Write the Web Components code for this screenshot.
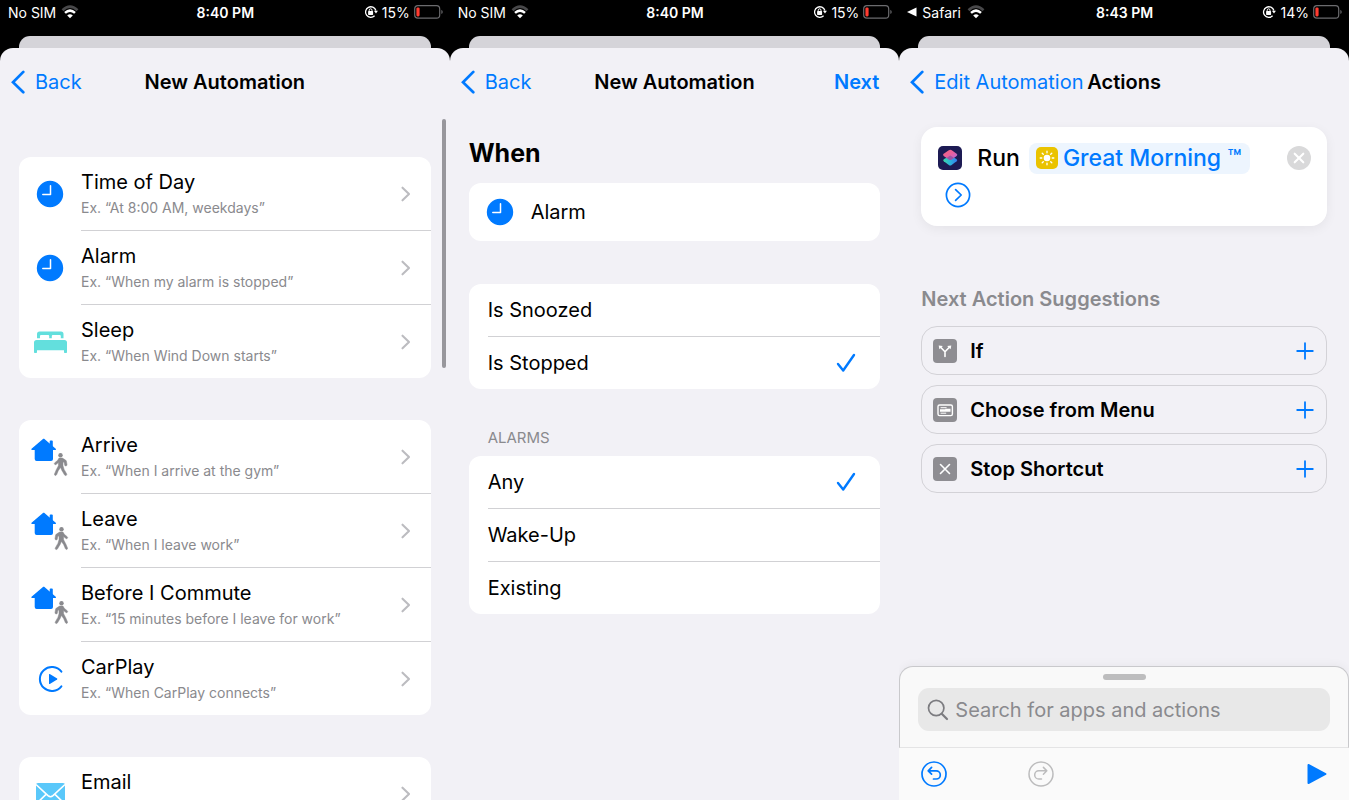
<!DOCTYPE html>
<html lang="en">
<head>
<meta charset="utf-8">
<meta name="viewport" content="width=device-width, initial-scale=1">
<title>New Automation</title>
<style>
    html, body {
        margin: 0;
        height: 100%;
    }

    body {
        --blue: #007aff;
        --gray: #8a8a8e;
        --sheet: #f2f1f6;
        --line: #d1d1d4;
        display: grid;
        grid-template-columns: repeat(3, 1fr);
        background: #000;
        color: #000;
        font-family: Inter, "Liberation Sans", sans-serif;
        font-size: 20px;
        overflow: hidden;
    }
</style>
</head>
<body>
    <phone-screen>
        <status-bar slot="status" carrier="No SIM" time="8:40 PM" battery="15%"></status-bar>
        <nav-bar slot="nav" back="Back" heading="New Automation"></nav-bar>
        <scroll-thumb slot="overlay"></scroll-thumb>
        <trigger-list>
            <card-group>
                <trigger-row icon="clock" label="Time of Day" example="Ex. “At 8:00 AM, weekdays”"></trigger-row>
                <trigger-row icon="clock" label="Alarm" example="Ex. “When my alarm is stopped”"></trigger-row>
                <trigger-row icon="bed" label="Sleep" example="Ex. “When Wind Down starts”"></trigger-row>
            </card-group>
            <card-group>
                <trigger-row icon="arrive" label="Arrive" example="Ex. “When I arrive at the gym”"></trigger-row>
                <trigger-row icon="leave" label="Leave" example="Ex. “When I leave work”"></trigger-row>
                <trigger-row icon="leave" label="Before I Commute" example="Ex. “15 minutes before I leave for work”"></trigger-row>
                <trigger-row icon="carplay" label="CarPlay" example="Ex. “When CarPlay connects”"></trigger-row>
            </card-group>
            <card-group>
                <trigger-row icon="email" label="Email" example=" "></trigger-row>
            </card-group>
        </trigger-list>
    </phone-screen>

    <phone-screen>
        <status-bar slot="status" carrier="No SIM" time="8:40 PM" battery="15%"></status-bar>
        <nav-bar slot="nav" back="Back" heading="New Automation" next="Next"></nav-bar>
        <when-form>
            <card-group><summary-row icon="clock">Alarm</summary-row></card-group>
            <option-group name="event" options="Is Snoozed|Is Stopped" value="Is Stopped"></option-group>
            <option-group name="alarm" label="ALARMS" options="Any|Wake-Up|Existing" value="Any"></option-group>
        </when-form>
    </phone-screen>

    <phone-screen>
        <status-bar slot="status" return-app carrier="Safari" time="8:43 PM" battery="14%"></status-bar>
        <nav-bar slot="nav" back="Edit Automation" heading="Actions"></nav-bar>
        <action-card verb="Run">Great Morning ™</action-card>
        <suggestion-list heading="Next Action Suggestions">
            <suggestion-item icon="branch">If</suggestion-item>
            <suggestion-item icon="menu">Choose from Menu</suggestion-item>
            <suggestion-item icon="stop">Stop Shortcut</suggestion-item>
        </suggestion-list>
        <search-sheet slot="footer" placeholder="Search for apps and actions"></search-sheet>
    </phone-screen>

<script>
const HOUSE = `
    <path fill="#007aff" stroke="#007aff" stroke-linejoin="round" stroke-width="1.4" d="M13.7 2.4 L25.3 12.3 H22.3 V22 Q22.3 23.3 21 23.3 H6.7 Q5.4 23.3 5.4 22 V12.3 H2 Z"/>
    <path fill="#007aff" d="M19.7 4.3q0-.9.9-.9h1.3q.9 0 .9.9V11h-3.1z"/>`;
const WALKER = `
    <circle cx="7.5" cy="2.2" r="2.2"/>
    <path stroke="#8a8a8e" stroke-width=".5" d="M5.6 5.1H9l1.3 2.2 2.9 2.4q1.1 1-.1 1.9-.5.3-1.2-.2L9.6 9.6v3.1l2.2 4.2 1.7 4q.3 1.3-.8 1.6-.8.1-1.3-.8l-1.8-4.2-2.2-3.1-1.3 3.2-2.7 4.4q-.7.9-1.6.4-1-.6-.4-1.7l2.5-4.3L5 12.8V8.7L3.7 9.8l-.4 2.4q-.3 1-1.3.8-1-.2-1-1.3l.5-3.2Q1.6 7.8 2.4 7.1z"/>`;

// name: [width, height, markup]
const ICONS = {
    clock: [40, 40, `<circle cx="20" cy="20" r="13.2" fill="#007aff"/><path d="M20.5 11.8V20.5H12.8" fill="none" stroke="#fff" stroke-width="1.5" stroke-linecap="round" stroke-linejoin="round"/>`],
    bed: [40, 40, `<g fill="#63dfdd"><path d="M7 16.2V12Q7 9.5 9.5 9.5H31q2.5 0 2.5 2.5v4.2h-2.7V14q0-1-1-1h-7q-1 0-1 1v2.2h-2.6V14q0-1-1-1h-7.2q-1 0-1 1v2.2z"/><path d="M4 30.3V20.6Q4 18 6.6 18h27.8q2.6 0 2.6 2.6v9.7q0 .7-.8.7h-1.4q-.8 0-.8-.8v-1.9H7v2q0 .7-.8.7H4.8q-.8 0-.8-.7z"/></g>`],
    arrive: [40, 40, HOUSE + `<g fill="#8a8a8e" transform="translate(38 16) scale(-1 1)">${WALKER}</g>`],
    leave: [40, 40, HOUSE + `<g fill="#8a8a8e" transform="translate(24 16)">${WALKER}</g>`],
    carplay: [40, 40, `<g transform="translate(0 -1)"><path d="M31.4 13.7A12 12 0 1 0 31.4 28.3" fill="none" stroke="#007aff" stroke-width="2" stroke-linecap="round"/><path d="M19 16.6v8.9q0 .9.8.5l7.3-4.5q.6-.5 0-.9l-7.3-4.5q-.8-.4-.8.5z" fill="#007aff"/></g>`],
    email: [40, 40, `<rect x="6" y="9" width="29" height="22" rx="2" fill="#5ac8fa"/><path d="M6 10.5L18 21.7q2.5 2 5 0L35 10.5M6 30l10.3-9.8M35 30L24.7 20.2" fill="none" stroke="#fff" stroke-width="1.6"/>`],
    chevron: [10, 16, `<path d="M1.5 1.7L8 8l-6.5 6.3" fill="none" stroke="#bcbcc0" stroke-width="2.1" stroke-linecap="round" stroke-linejoin="round"/>`],
    back: [14, 24, `<path d="M12.3 1.9L2 12.2l10.3 10.1" fill="none" stroke="#007aff" stroke-width="2.7" stroke-linecap="round"/>`],
    check: [20, 20, `<path d="M2 11l5.2 6.5L18 2" fill="none" stroke="#007aff" stroke-width="2.4" stroke-linecap="round" stroke-linejoin="round"/>`],
    wifi: [18, 14, `<g fill="none"><path d="M1.5 5.2Q9-2 16.5 5.2" stroke="#48484a" stroke-width="2.6"/><path d="M4 7.9q5-4.6 10 0" stroke="#fff" stroke-width="2.5"/></g><path d="M6.2 10.4q2.8-2.4 5.6 0L9 13.3z" fill="#fff"/>`],
    lock: [14, 14, `<path d="M11.9 5.5A5.3 5.3 0 1 0 10.6 10.8" fill="none" stroke="#fff" stroke-width="1.3"/><path d="M9.9 5.8h4L12 8.6z" fill="#fff"/><rect x="4.1" y="6.1" width="5" height="3.8" rx=".6" fill="#fff"/><path d="M5.2 6.4V5.2a1.4 1.4 0 0 1 2.8 0v1.2" fill="none" stroke="#fff"/>`],
    battery: [29, 14, `<rect x=".7" y=".7" width="25" height="12.4" rx="3.2" fill="none" stroke="#6b6b6e" stroke-width="1.2"/><rect x="2.4" y="2.4" width="3.2" height="9" rx="1.3" fill="#ff3b30"/><path d="M27.4 4.8q1.3.9 1.3 2.1T27.4 9z" fill="#6b6b6e"/>`],
    caret: [10, 10, `<path d="M0 5L9.5.5v9z" fill="#fff"/>`],
    shortcuts: [24, 24, `<defs><linearGradient id="a" x1="0" y1="0" x2="1" y2="1"><stop stop-color="#f8677a"/><stop offset=".5" stop-color="#e95fa0"/><stop offset="1" stop-color="#a96ae8"/></linearGradient><linearGradient id="b" x1="0" y1="0" x2="1" y2="0"><stop stop-color="#3ed9a4"/><stop offset=".5" stop-color="#2bb4dc"/><stop offset="1" stop-color="#367cf0"/></linearGradient></defs><rect width="24" height="24" rx="5" fill="#1d1b54"/><path d="M12.6 9.2l6 4.1q1.3 1 0 2l-5 3.7q-1.4 1-2.8 0l-5-3.7q-1.3-1 0-2z" fill="url(#b)"/><path d="M10.8 4.2q1.5-1 3 0l4.8 3.6q1.4 1.1 0 2.2l-4.8 3.5q-1.5 1-3 0L5.7 10q-1.4-1.1 0-2.2z" fill="url(#a)"/><path d="M8.5 11.9l2.3 1.6q1.5 1 3 0l2.3-1.6-3-2q-.8-.6-1.6 0z" fill="#7b4f99" opacity=".65"/>`],
    sun: [22, 22, `<rect width="22" height="22" rx="5" fill="#eac300"/><circle cx="11" cy="11" r="3.3" fill="#fff"/><path d="M11 4.2v1.6M11 16.2v1.6M4.2 11h1.6M16.2 11h1.6M6.2 6.2l1.1 1.1M14.7 14.7l1.1 1.1M6.2 15.8l1.1-1.1M14.7 7.3l1.1-1.1" stroke="#fff" stroke-width="1.3" stroke-linecap="round"/>`],
    close: [24, 24, `<circle cx="12" cy="12" r="12" fill="#d9d9da"/><path d="M7.7 7.7l8.6 8.6M16.3 7.7l-8.6 8.6" stroke="#fff" stroke-width="2.1" stroke-linecap="round"/>`],
    more: [26, 26, `<g fill="none" stroke="#007aff" stroke-width="1.7"><circle cx="13" cy="13" r="11.6"/><path d="M10.6 7.6l5.6 5.4-5.6 5.4" stroke-linecap="round" stroke-linejoin="round"/></g>`],
    branch: [24, 24, `<rect width="24" height="24" rx="4" fill="#8e8d92"/><path d="M12 17.5V12.8L7.4 8M12 12.8L16.6 8" fill="none" stroke="#fff" stroke-width="1.6" stroke-linecap="round"/><path d="M5.7 6.4l4.2.5-3.5 3.4zM18.3 6.4l-4.2.5 3.5 3.4z" fill="#fff"/>`],
    menu: [24, 24, `<rect width="24" height="24" rx="4" fill="#8e8d92"/><rect x="5" y="7" width="14.4" height="10.6" rx="1.6" fill="none" stroke="#fff" stroke-width="1.4"/><path d="M7.6 9.7h6M7.6 15.2h5.6" stroke="#fff"/><path d="M7 11.2h5.3v-.5h5.2v3H7z" fill="#fff"/>`],
    stop: [24, 24, `<rect width="24" height="24" rx="4" fill="#8e8d92"/><path d="M7.5 7.5l9 9M16.5 7.5l-9 9" stroke="#fff" stroke-width="1.6" stroke-linecap="round"/>`],
    plus: [18, 18, `<path d="M9 1.2v15.6M1.2 9h15.6" stroke="#007aff" stroke-width="1.8" stroke-linecap="round"/>`],
    search: [22, 22, `<g fill="none" stroke="#7c7c80" stroke-linecap="round"><circle cx="9.2" cy="9" r="7.7" stroke-width="1.7"/><path d="M15 15l5 5" stroke-width="2.2"/></g>`],
    undo: [26, 26, `<g fill="none" stroke="#007aff" stroke-width="1.7" stroke-linecap="round" stroke-linejoin="round"><circle cx="13" cy="13" r="12"/><path d="M10.6 6.4L7.2 9.8l3.4 3.4M7.6 9.8h7.6a4.1 4.1 0 0 1 0 8.2h-2.7"/></g>`],
    redo: [26, 26, `<g fill="none" stroke="#bcbcbd" stroke-width="1.5" stroke-linecap="round" stroke-linejoin="round"><circle cx="13" cy="13" r="12"/><path d="M15.4 6.4l3.4 3.4-3.4 3.4M18.4 9.8h-7.6a4.1 4.1 0 0 0 0 8.2h2.7"/></g>`],
    play: [20, 22, `<path d="M1.4 1.9v18.2L18.6 11z" fill="#007aff" stroke="#007aff" stroke-width="1.8" stroke-linejoin="round"/>`]
};

const BUTTON_RESET = `
    button {
        margin: 0;
        padding: 0;
        border: 0;
        background: none;
        color: inherit;
        font: inherit;
        text-align: left;
        cursor: pointer;
    }
`;

class BaseElement extends HTMLElement {
    constructor() {
        super();

        this.attachShadow({ mode: 'open' });
    }

    connectedCallback() {
        this.shadowRoot.innerHTML = this.template();
    }

    attr(name) {
        return this.getAttribute(name) || '';
    }
}

class AppIcon extends BaseElement {
    template() {
        const [width, height, markup] = ICONS[this.attr('name')];

        return `
            <style>
                :host { display: block; flex: none; }
                svg { display: block; }
            </style>
            <svg width="${width}" height="${height}" viewBox="0 0 ${width} ${height}" aria-hidden="true">${markup}</svg>
        `;
    }
}

class PhoneScreen extends BaseElement {
    template() {
        return `
            <style>
                :host {
                    display: flex;
                    flex-direction: column;
                    min-width: 0;
                    height: 100vh;
                    overflow: hidden;
                }
                .behind {
                    flex: none;
                    height: 12px;
                    margin: 12px 19px 0;
                    border-radius: 11px 11px 0 0;
                    background: #d5d4d9;
                }
                .sheet {
                    position: relative;
                    display: flex;
                    flex: 1;
                    flex-direction: column;
                    min-height: 0;
                    border-radius: 13px 13px 0 0;
                    background: var(--sheet);
                }
                main {
                    flex: 1;
                    min-height: 0;
                    overflow: hidden;
                }
            </style>
            <slot name="status"></slot>
            <div class="behind"></div>
            <div class="sheet">
                <slot name="nav"></slot>
                <main><slot></slot></main>
                <slot name="footer"></slot>
                <slot name="overlay"></slot>
            </div>
        `;
    }
}

class StatusBar extends BaseElement {
    template() {
        const caret = this.hasAttribute('return-app') ? '<app-icon name="caret"></app-icon>' : '';

        return `
            <style>
                :host {
                    display: grid;
                    grid-template-columns: 1fr auto 1fr;
                    align-items: center;
                    flex: none;
                    height: 24px;
                    padding: 0 7px 0 8px;
                    color: #fff;
                    font-size: 14px;
                }
                div { display: flex; align-items: center; gap: 5px; }
                .left app-icon + span { margin-right: 1px; }
                .right { justify-content: flex-end; gap: 4px; }
                b { font-weight: 600; }
            </style>
            <div class="left">${caret}<span>${this.attr('carrier')}</span><app-icon name="wifi"></app-icon></div>
            <b>${this.attr('time')}</b>
            <div class="right"><app-icon name="lock"></app-icon><span>${this.attr('battery')}</span><app-icon name="battery"></app-icon></div>
        `;
    }
}

class NavBar extends BaseElement {
    template() {
        const next = this.attr('next') ? `<button class="next">${this.attr('next')}</button>` : '<span></span>';

        return `
            <style>
                ${BUTTON_RESET}
                :host {
                    display: grid;
                    grid-template-columns: 1fr auto 1fr;
                    align-items: center;
                    flex: none;
                    height: 68px;
                    padding: 0 11px;
                }
                h1 { margin: 0; font-size: 20px; font-weight: 600; }
                button { color: var(--blue); white-space: nowrap; }
                .back { display: flex; align-items: center; gap: 10px; }
                .next { justify-self: end; padding-right: 9px; font-weight: 600; }
            </style>
            <button class="back"><app-icon name="back"></app-icon>${this.attr('back')}</button>
            <h1>${this.attr('heading')}</h1>
            ${next}
        `;
    }
}

// Scroll indicator, drawn over the list
class ScrollThumb extends BaseElement {
    template() {
        return `
            <style>
                :host {
                    position: absolute;
                    top: 71px;
                    right: 4px;
                    width: 4px;
                    height: 249px;
                    border-radius: 2px;
                    background: #98979c;
                }
            </style>
        `;
    }
}

class TriggerList extends BaseElement {
    template() {
        return `
            <style>
                :host {
                    display: flex;
                    flex-direction: column;
                    gap: 42px;
                    padding: 41px 19px 0;
                }
            </style>
            <slot></slot>
        `;
    }
}

class CardGroup extends BaseElement {
    template() {
        return `
            <style>
                :host {
                    display: block;
                    border-radius: 12px;
                    background: #fff;
                    overflow: hidden;
                }
                ::slotted(:last-child) { --divider: 0; }
            </style>
            <slot></slot>
        `;
    }
}

class TriggerRow extends BaseElement {
    template() {
        return `
            <style>
                ${BUTTON_RESET}
                :host { display: block; }
                button {
                    display: grid;
                    grid-template-columns: 62px 1fr;
                    align-items: center;
                    width: 100%;
                }
                .icon { justify-self: center; }
                .body {
                    display: flex;
                    align-items: center;
                    justify-content: space-between;
                    height: 73px;
                    padding-right: 20px;
                    border-bottom: var(--divider, 1px) solid var(--line);
                }
                .text { padding-top: 2px; }
                .label, .example { display: block; line-height: 26px; }
                .example { min-height: 26px; color: var(--gray); font-size: 14px; }
            </style>
            <button>
                <app-icon class="icon" name="${this.attr('icon')}"></app-icon>
                <span class="body">
                    <span class="text">
                        <span class="label">${this.attr('label')}</span>
                        <span class="example">${this.attr('example')}</span>
                    </span>
                    <app-icon name="chevron"></app-icon>
                </span>
            </button>
        `;
    }
}

class SummaryRow extends BaseElement {
    template() {
        return `
            <style>
                :host {
                    display: grid;
                    grid-template-columns: 62px 1fr;
                    align-items: center;
                    height: 58px;
                }
                app-icon { justify-self: center; }
            </style>
            <app-icon name="${this.attr('icon')}"></app-icon>
            <span><slot></slot></span>
        `;
    }
}

class WhenForm extends BaseElement {
    template() {
        return `
            <style>
                :host { display: block; padding: 21px 19px 0; }
                h2 { margin: 0 0 14px; font-size: 25px; font-weight: 700; line-height: 32px; }
                ::slotted(option-group) { margin-top: 43px; }
                ::slotted(option-group[label]) { margin-top: 39px; }
            </style>
            <h2>When</h2>
            <slot></slot>
        `;
    }
}

class OptionGroup extends BaseElement {
    template() {
        const name = this.attr('name');
        const value = this.attr('value');
        const legend = this.attr('label') ? `<h3>${this.attr('label')}</h3>` : '';
        const rows = this.attr('options').split('|').map((option) => `
            <label>
                <span>${option}</span>
                <input type="radio" name="${name}" value="${option}" ${option === value ? 'checked' : ''}>
                <app-icon name="check"></app-icon>
            </label>
        `).join('');

        return `
            <style>
                :host { display: block; }
                h3 {
                    margin: 0 0 8px 19px;
                    color: var(--gray);
                    font-size: 15px;
                    font-weight: 400;
                    line-height: 20px;
                }
                .card {
                    padding-left: 19px;
                    border-radius: 12px;
                    background: #fff;
                }
                label {
                    display: flex;
                    align-items: center;
                    justify-content: space-between;
                    height: 52px;
                    padding-right: 24px;
                    cursor: pointer;
                }
                label + label { border-top: 1px solid var(--line); }
                input { appearance: none; width: 0; height: 0; margin: 0 0 0 auto; }
                app-icon { visibility: hidden; }
                input:checked + app-icon { visibility: visible; }
            </style>
            ${legend}
            <div class="card" role="radiogroup">${rows}</div>
        `;
    }
}

class ActionCard extends BaseElement {
    template() {
        return `
            <style>
                ${BUTTON_RESET}
                :host {
                    display: block;
                    margin: 11px 22px 0;
                    padding: 14px 16px 18px 17px;
                    border-radius: 16px;
                    background: #fff;
                    box-shadow: 0 3px 12px rgba(0, 0, 0, 0.06);
                }
                .line {
                    display: flex;
                    align-items: center;
                    height: 34px;
                    font-size: 23px;
                    white-space: nowrap;
                }
                .verb { margin: 0 9px 0 15px; font-weight: 500; }
                .token {
                    display: flex;
                    align-items: center;
                    gap: 5px;
                    height: 31px;
                    padding: 0 8px 0 7px;
                    border-radius: 8px;
                    background: #edf5fe;
                    color: var(--blue);
                    font-weight: 500;
                }
                .close { margin-left: auto; }
                .more { display: block; margin: 7px 0 0 7px; }
            </style>
            <div class="line">
                <app-icon name="shortcuts"></app-icon>
                <span class="verb">${this.attr('verb')}</span>
                <button class="token"><app-icon name="sun"></app-icon><slot></slot></button>
                <button class="close" aria-label="Remove"><app-icon name="close"></app-icon></button>
            </div>
            <button class="more" aria-label="Show more"><app-icon name="more"></app-icon></button>
        `;
    }
}

class SuggestionList extends BaseElement {
    template() {
        return `
            <style>
                :host {
                    display: flex;
                    flex-direction: column;
                    gap: 10px;
                    margin: 60px 22px 0;
                }
                h2 {
                    margin: 0 0 4px;
                    color: var(--gray);
                    font-size: 20px;
                    font-weight: 600;
                    line-height: 26px;
                }
            </style>
            <h2>${this.attr('heading')}</h2>
            <slot></slot>
        `;
    }
}

class SuggestionItem extends BaseElement {
    template() {
        return `
            <style>
                ${BUTTON_RESET}
                :host { display: block; }
                button {
                    display: flex;
                    align-items: center;
                    gap: 13px;
                    box-sizing: border-box;
                    width: 100%;
                    height: 49px;
                    padding: 0 12px 0 11px;
                    border: 1px solid #d3d2d7;
                    border-radius: 16px;
                    font-weight: 600;
                }
                span { flex: 1; }
            </style>
            <button>
                <app-icon name="${this.attr('icon')}"></app-icon>
                <span><slot></slot></span>
                <app-icon name="plus"></app-icon>
            </button>
        `;
    }
}

class SearchSheet extends BaseElement {
    template() {
        return `
            <style>
                ${BUTTON_RESET}
                :host { display: block; flex: none; }
                .drawer {
                    padding: 7px 18px 16px;
                    border: 1px solid #c9c9cc;
                    border-bottom-color: #e4e4e5;
                    border-radius: 14px 14px 0 0;
                    background: #f9f9f9;
                    box-shadow: 0 -2px 8px rgba(0, 0, 0, 0.04);
                }
                .handle {
                    width: 43px;
                    height: 6px;
                    margin: 0 auto 8px;
                    border-radius: 3px;
                    background: #bdbdbe;
                }
                label {
                    display: flex;
                    align-items: center;
                    gap: 6px;
                    height: 43px;
                    padding: 0 9px;
                    border-radius: 11px;
                    background: #e8e8e8;
                }
                input {
                    flex: 1;
                    min-width: 0;
                    padding: 0;
                    border: 0;
                    outline: 0;
                    background: none;
                    font: inherit;
                }
                input::placeholder { color: var(--gray); opacity: 1; }
                .tools {
                    display: flex;
                    align-items: center;
                    gap: 81px;
                    height: 52px;
                    padding: 0 22px;
                    background: #fafafa;
                }
                .play { margin-left: auto; }
            </style>
            <div class="drawer">
                <div class="handle"></div>
                <label>
                    <app-icon name="search"></app-icon>
                    <input type="search" aria-label="${this.attr('placeholder')}" placeholder="${this.attr('placeholder')}">
                </label>
            </div>
            <div class="tools">
                <button aria-label="Undo"><app-icon name="undo"></app-icon></button>
                <button aria-label="Redo" disabled><app-icon name="redo"></app-icon></button>
                <button class="play" aria-label="Play"><app-icon name="play"></app-icon></button>
            </div>
        `;
    }
}

customElements.define('app-icon', AppIcon);
customElements.define('phone-screen', PhoneScreen);
customElements.define('status-bar', StatusBar);
customElements.define('nav-bar', NavBar);
customElements.define('scroll-thumb', ScrollThumb);
customElements.define('trigger-list', TriggerList);
customElements.define('card-group', CardGroup);
customElements.define('trigger-row', TriggerRow);
customElements.define('summary-row', SummaryRow);
customElements.define('when-form', WhenForm);
customElements.define('option-group', OptionGroup);
customElements.define('action-card', ActionCard);
customElements.define('suggestion-list', SuggestionList);
customElements.define('suggestion-item', SuggestionItem);
customElements.define('search-sheet', SearchSheet);
</script>
</body>
</html>
